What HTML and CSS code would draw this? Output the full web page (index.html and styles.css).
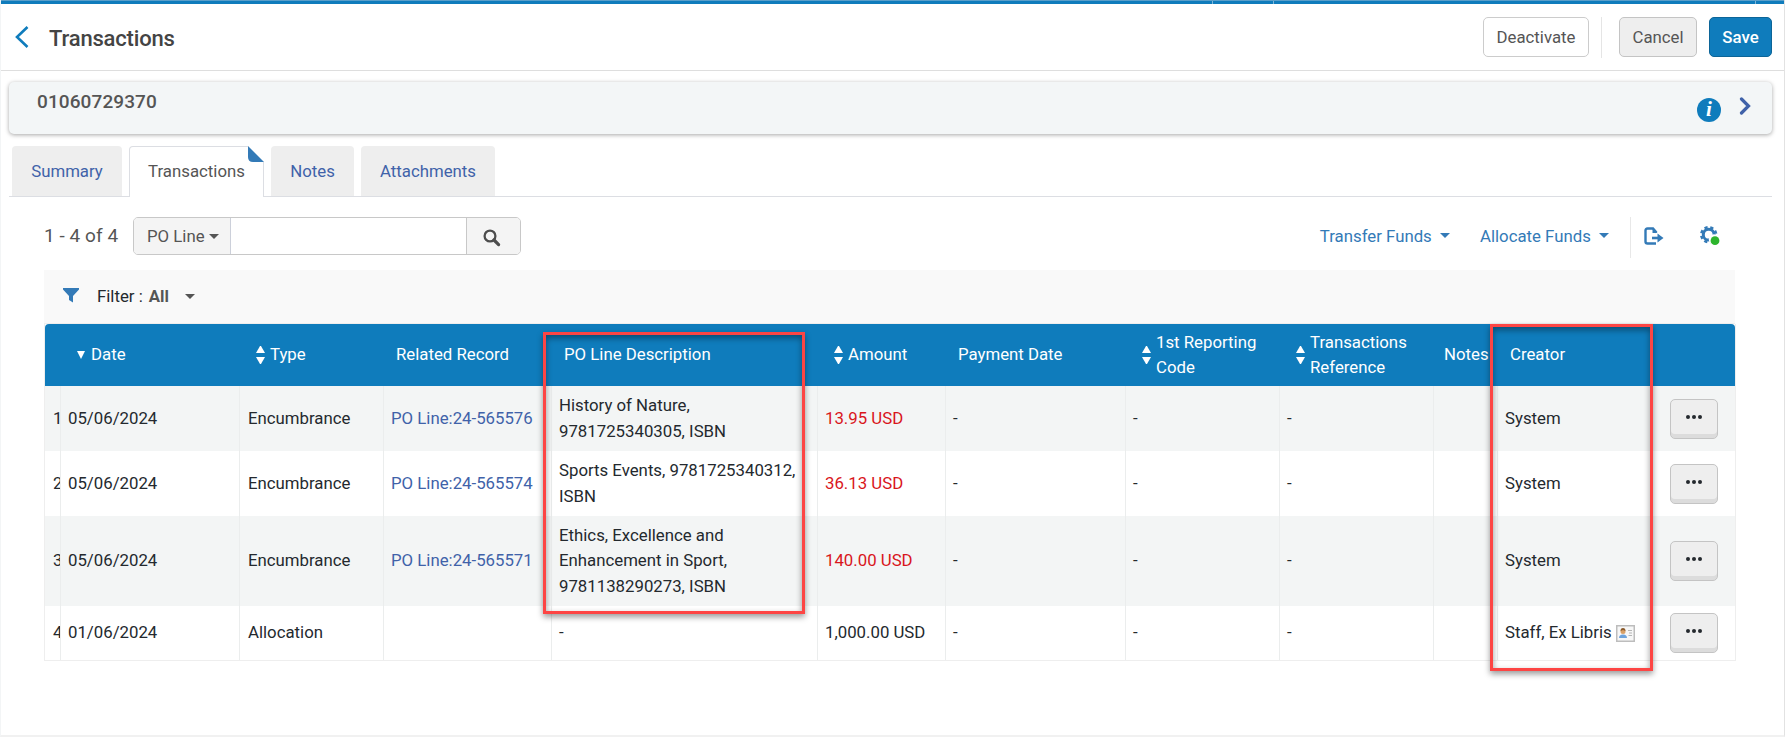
FILE: index.html
```html
<!DOCTYPE html>
<html lang="en">
<head>
<meta charset="utf-8">
<title>Transactions</title>
<link rel="stylesheet" href="styles.css">
</head>
<body>
<div class="page">
<div class="topbar"><i></i><i></i><i></i></div>
<header class="head">
  <svg class="back" width="14" height="22" viewBox="0 0 14 22"><path d="M12.5 1 2 11l10.5 10" fill="none" stroke="#0f7cbc" stroke-width="2.6"/></svg>
  <h1>Transactions</h1>
  <button class="btn deact">Deactivate</button>
  <span class="sep"></span>
  <button class="btn cancel">Cancel</button>
  <button class="btn save">Save</button>
</header>
<section class="card">
  <span class="code">01060729370</span>
  <span class="info">i</span>
  <svg class="next" width="12" height="18" viewBox="0 0 12 18"><path d="m2.500 2 7 7-7 7" fill="none" stroke="#4062a9" stroke-width="3.200" stroke-linecap="round"/></svg>
</section>
<nav class="tabs">
  <a class="tab t1">Summary</a><a class="tab active">Transactions<svg class="corner" width="16" height="16"><path d="M0 0 16 16H5Q0 16 0 11Z" fill="#337ab7"/></svg></a><a class="tab t3">Notes</a><a class="tab t4">Attachments</a>
</nav>
<div class="tools">
  <span class="count">1 - 4 of 4</span>
  <div class="search"><span class="field">PO Line <i class="caret"></i></span><span class="input"></span><span class="go"><svg width="18" height="18" viewBox="0 0 18 18"><circle cx="7" cy="7" r="5.4" fill="none" stroke="#4d4d4d" stroke-width="2.3"/><path d="m11 11 4.6 4.6" stroke="#4d4d4d" stroke-width="3.2" stroke-linecap="round"/></svg></span></div>
  <a class="funds">Transfer Funds <i class="caret"></i></a>
  <a class="funds alloc">Allocate Funds <i class="caret"></i></a>
  <span class="sep2"></span>
  <svg class="export" width="20" height="18" viewBox="0 0 20 18"><path d="M12.500 5.500 9 1.500H3.500Q1.500 1.500 1.500 3.500v11q0 2 2 2H12" fill="none" stroke="#337ab7" stroke-width="2.400"/><path d="M8.500 1v5h5z" fill="#337ab7"/><path d="M8 11h6" stroke="#337ab7" stroke-width="2.600"/><path d="m13.500 6.500 6 4.500-6 4.500z" fill="#337ab7"/></svg>
  <svg class="gear" width="21" height="20" viewBox="0 0 21 20"><circle cx="8.700" cy="8.700" r="5.400" fill="none" stroke="#337ab7" stroke-width="3"/><circle cx="8.700" cy="8.700" r="7.500" fill="none" stroke="#337ab7" stroke-width="2.400" stroke-dasharray="3.200 2.690" stroke-dashoffset="-1.345"/><circle cx="14" cy="13.500" r="5.200" fill="#fff"/><circle cx="15" cy="14.700" r="4.400" fill="#2db52d"/></svg>
</div>
<div class="filter">
  <svg width="16" height="16" viewBox="0 0 16 16"><path d="M0 1h16v1.500L10 9v6.500L6 13V9L0 2.500z" fill="#337ab7"/></svg>
  <span class="flabel">Filter :</span><b>All</b><i class="caret"></i>
</div>
<div class="tablewrap">
<table>
<colgroup><col class="c0"><col class="c1"><col class="c2"><col class="c3"><col class="c4"><col class="c5"><col class="c6"><col class="c7"><col class="c8"><col class="c9"><col class="c10"><col class="c11"></colgroup>
<thead><tr>
<th></th><th><div class="h"><i class="down"></i>Date</div></th><th><div class="h"><i class="sort"></i>Type</div></th><th>Related Record</th><th>PO Line Description</th><th><div class="h"><i class="sort"></i>Amount</div></th><th>Payment Date</th><th><div class="h"><i class="sort"></i><span>1st Reporting<br>Code</span></div></th><th><div class="h"><i class="sort"></i><span>Transactions<br>Reference</span></div></th><th class="nt">Notes</th><th class="cr">Creator</th><th></th>
</tr></thead>
<tbody>
<tr class="r2 odd"><td class="n">1</td><td>05/06/2024</td><td>Encumbrance</td><td><a>PO Line:24-565576</a></td><td>History of Nature,<br>9781725340305, ISBN</td><td class="red">13.95 USD</td><td>-</td><td>-</td><td>-</td><td></td><td>System</td><td class="act"><button class="more"><i></i><i></i><i></i></button></td></tr>
<tr class="r2"><td class="n">2</td><td>05/06/2024</td><td>Encumbrance</td><td><a>PO Line:24-565574</a></td><td>Sports Events, 9781725340312,<br>ISBN</td><td class="red">36.13 USD</td><td>-</td><td>-</td><td>-</td><td></td><td>System</td><td class="act"><button class="more"><i></i><i></i><i></i></button></td></tr>
<tr class="r3 odd"><td class="n">3</td><td>05/06/2024</td><td>Encumbrance</td><td><a>PO Line:24-565571</a></td><td>Ethics, Excellence and<br>Enhancement in Sport,<br>9781138290273, ISBN</td><td class="red">140.00 USD</td><td>-</td><td>-</td><td>-</td><td></td><td>System</td><td class="act"><button class="more"><i></i><i></i><i></i></button></td></tr>
<tr class="r1"><td class="n">4</td><td>01/06/2024</td><td>Allocation</td><td></td><td>-</td><td>1,000.00 USD</td><td>-</td><td>-</td><td>-</td><td></td><td>Staff, Ex Libris <svg class="id" width="19" height="17" viewBox="0 0 19 17"><rect x=".75" y=".75" width="17.500" height="15.500" fill="#f7f7f7" stroke="#bdbdbd" stroke-width="1.500"/><path d="M3 13q0-3.500 4-3.500t4 3.500z" fill="#6ea3dc"/><circle cx="7" cy="6.500" r="2.500" fill="#d9a066"/><path d="M4.500 6q0-3 2.500-3t2.500 3L7 5z" fill="#8a5a2b"/><path d="M12 5.500h4M13 8h3M12.500 10.500h3.500" stroke="#b5b5b5"/></svg></td><td class="act"><button class="more"><i></i><i></i><i></i></button></td></tr>
</tbody>
</table>
<div class="mark m1"></div><div class="mark m2"></div>
</div>
</div>
</body>
</html>
```

FILE: styles.css
```css
*{box-sizing:border-box}
body{margin:0;font:16.8px/25.2px Roboto,sans-serif;color:#24292e;background:#fff}
.page{height:737px;border-left:1px solid #f3f5f6;border-right:1px solid #e2e2e2;border-bottom:2px solid #f1f1f1;overflow:hidden}
.topbar{height:4px;background:#0f7cbc;border-top:1px solid #5a9fca;display:flex;justify-content:flex-end}
.topbar i{width:1px;height:3px;background:#7db5d8;margin-right:60px}
.topbar i:nth-child(2){margin-right:481px}
.topbar i:nth-child(3){margin-right:28px}
.head{height:67px;border-bottom:1px solid #dedede;display:flex;align-items:center;padding:0 12px 0 14px}
.back{margin-bottom:1px}
h1{margin:3px auto 0 20px;font-size:22px;font-weight:500;color:#444;letter-spacing:-.17px}
.btn{font:16.8px/24px Roboto,sans-serif;height:40px;border:1px solid #ccc;border-radius:5px;background:#fff;color:#555;padding:1px 0 0;margin-bottom:1px}
.deact{width:106px}
.sep{width:1px;height:41px;background:#e5e5e5;margin:0 17px 0 12px}
.cancel{width:78px;background:#eee;border-color:#c4c4c4;margin-right:12px}
.save{width:63px;background:#0f7cbc;border-color:#0c6598;color:#fff;font-size:16.8px;font-weight:500}
.card{height:52px;margin:11px 12px 0 8px;background:#f3f6f7;border-radius:5px;box-shadow:0 1px 4px rgba(0,0,0,.35);display:flex;align-items:flex-start;padding:7px 21px 0 28px}
.code{font-size:19px;font-weight:500;color:#555;margin-right:auto;letter-spacing:.1px}
.info{width:24px;height:24px;margin-top:9px;border-radius:50%;background:#0f7cbc;color:#fff;text-align:center;font:italic bold 21px/23px "Liberation Serif",serif}
.next{margin:8px 0 0 18px}
.tabs{display:flex;margin:12px 12px 0 8px;padding-left:3px;height:51px;border-bottom:1px solid #dcdee3}
.tab{height:50px;background:#eee;border-radius:4px 4px 0 0;color:#4062a9;text-align:center;line-height:50px;margin-right:7px}
.t1{width:110px}.t3{width:83px}.t4{width:134px}
.active{width:135px;height:51px;background:#fff;border:1px solid #dcdee3;border-bottom:0;color:#555;position:relative;line-height:48px}
.corner{position:absolute;right:-1px;top:-1px;background:#fff}
.tools{display:flex;align-items:center;height:73px;padding:5px 0 0 43px}
.count{font-size:19px;color:#555;width:89px;white-space:nowrap;letter-spacing:.06px}
.caret{display:inline-block;border:5px solid transparent;border-top-color:currentColor;border-bottom:0;vertical-align:3px}
.search{width:388px;height:38px;border:1px solid #c8c8c8;border-radius:5px;display:flex;overflow:hidden}
.field{width:97px;background:#f4f4f4;color:#555;padding-left:13px;line-height:36px;border-right:1px solid #ccd0da;white-space:nowrap}
.input{flex:1}
.go{width:54px;background:#f4f4f4;border-left:1px solid #c8c8c8;padding:11px 0 0 16px}
.go svg{display:block}
.funds{color:#337ab7;margin:2px 0 0 auto;white-space:nowrap}
.funds .caret{margin-left:4px;vertical-align:4px}
.alloc{margin-left:30px}
.sep2{width:1px;height:41px;background:#e8e8e8;margin:3px 13px 0 21px}
.gear{margin:0 63px 0 36px}
.filter{height:54px;margin:0 49px 0 43px;background:#f9f9f9;border-bottom:1px solid #eee;display:flex;align-items:center;padding-left:19px}
.filter svg{margin:0 18px 3px 0}
.filter b{color:#555;margin:1px 16px 0 6px}
.filter .caret{color:#555}
.tablewrap{margin:0 49px 0 43px;position:relative}
table{table-layout:fixed;width:1692px;border-collapse:separate;border-spacing:0;border-left:1px solid #eee;border-right:1px solid #eee;border-bottom:1px solid #eee}
.c0{width:16px}.c1{width:179px}.c2{width:144px}.c3{width:168px}.c4{width:266px}.c5{width:128px}.c6{width:180px}.c7{width:154px}.c8{width:154px}.c9{width:64px}.c10{width:164px}
th{height:62px;background:#0f7cbc;color:#fff;font-weight:400;text-align:left;padding:0 0 0 12px;white-space:nowrap}
th:first-child{border-radius:4px 0 0 0}th:last-child{border-radius:0 4px 0 0}
th.nt{padding-left:10px}
.h{display:flex;align-items:center;margin-left:4px}
.down{border:4.500px solid transparent;border-top:8px solid #fff;border-bottom:0;margin-right:6px}
.sort{width:9px;height:18px;margin-right:5px;display:flex;flex-direction:column;justify-content:space-between}
.sort:before{content:"";border:4.500px solid transparent;border-bottom:7px solid #fff;border-top:0}
.sort:after{content:"";border:4.500px solid transparent;border-top:7px solid #fff;border-bottom:0}
td{padding:0 0 0 7px;border-right:1px solid #ebeded;white-space:nowrap}
td:nth-child(3){padding-left:8px}
td.n{overflow:hidden;padding-left:8px}
td:nth-child(11),td:last-child{border-right:0}
.odd td{background:#f3f5f5}
.r2 td{height:65px}.r3 td{height:90px}.r1 td{height:54px}
td a{color:#4062a9}
.red{color:#d9161c}
.id{vertical-align:-4px}
td.act{padding-left:8px}
.more{display:flex;justify-content:center;align-items:center;gap:2px;width:48px;height:40px;border:1px solid #c4c4c4;border-radius:5px;background:#eee;box-shadow:inset 0 -4px #dcdcdc;padding:0 0 4px}
.more i{width:4px;height:4px;border-radius:50%;background:#24292e}
.mark{position:absolute;border:3px solid #fd4544;box-shadow:0 3px 6px rgba(0,0,0,.4),inset 0 3px 6px rgba(0,0,0,.4)}
.m1{left:499px;top:8px;width:262px;height:282px}
.m2{left:1446px;top:0;width:163px;height:347px}
```
